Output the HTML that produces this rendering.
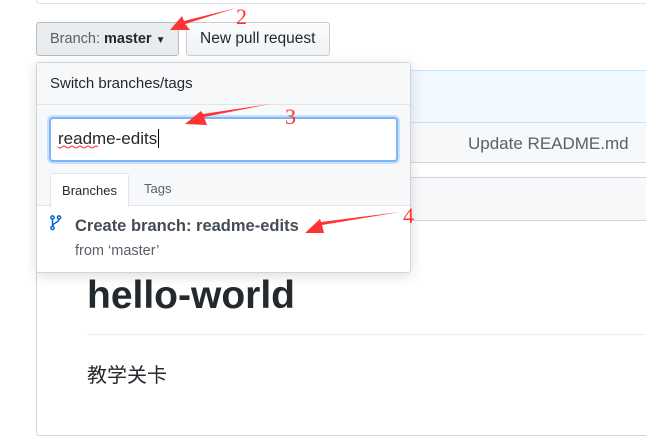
<!DOCTYPE html>
<html><head><meta charset="utf-8"><style>
*{box-sizing:border-box;margin:0;padding:0}
body{width:646px;height:437px;overflow:hidden;background:#fff;font-family:"Liberation Sans","Noto Sans CJK SC",sans-serif;position:relative;color:#24292e}
.a{position:absolute}
.btn{position:absolute;top:22px;height:34px;border:1px solid #c9cdd1;border-radius:3px;background:linear-gradient(#fafbfc,#eff3f6);font-size:14.5px;line-height:32px;padding-left:13px;color:#24292e}
</style></head><body>
<div class="a" style="left:36px;top:-10px;width:620px;height:14px;border:1px solid #e1e4e8;border-radius:3px"></div>
<div class="a" style="left:36px;top:70px;width:620px;height:366px;border:1px solid #d1d5da;border-radius:3px"></div>
<div class="a" style="left:37px;top:70px;width:620px;height:53px;background:#f1f8ff;border-top:1px solid #c8e1ff;border-bottom:1px solid #c8e1ff"></div>
<div class="a" style="left:37px;top:123px;width:620px;height:40px;background:#f6f8fa;border-bottom:1px solid #d1d5da"></div>
<div class="a" style="left:468px;top:134px;font-size:17px;color:#586069">Update README.md</div>
<div class="a" style="left:37px;top:177px;width:620px;height:44px;background:#f6f8fa;border-top:1px solid #d1d5da;border-bottom:1px solid #d1d5da"></div>
<div class="a" style="left:87px;top:274px;font-size:39px;font-weight:bold;color:#24292e">hello-world</div>
<div class="a" style="left:87px;top:334px;width:570px;height:1px;background:#eaecef"></div>
<div class="a" style="left:87px;top:359px;font-size:20px">教学关卡</div>

<div class="btn" style="left:36px;width:143px;background:#e9ecef;border-color:#b8bcc0"><span style="color:#586069">Branch:</span> <b style="font-weight:bold">master</b> <span style="font-size:10px">▼</span></div>
<div class="btn" style="left:186px;width:144px;font-size:15.5px">New pull request</div>

<div class="a" style="left:36px;top:62px;width:375px;height:211px;background:#fff;border:1px solid #d1d5da;border-radius:3px;box-shadow:0 3px 12px rgba(27,31,35,.15)">
 <div style="height:42px;background:#f6f8fa;border-bottom:1px solid #e1e4e8;font-size:15px;line-height:42px;padding-left:13px">Switch branches/tags</div>
 <div style="height:101px;background:#f6f8fa;border-bottom:1px solid #e1e4e8;position:relative">
  <div class="a" style="left:12px;top:12px;width:349px;height:45px;border:2px solid #7eb4f8;border-radius:4px;background:#fff;box-shadow:0 0 0 2px #c8e1ff;font-size:17px;line-height:40px;padding-left:7px">readme-edits<span style="border-left:1px solid #000;margin-left:1px"></span></div>
  <div class="a" style="left:13px;top:68px;width:79px;height:34px;background:#fff;border:1px solid #e1e4e8;border-bottom:none;border-radius:3px 3px 0 0;font-size:13px;line-height:33px;text-align:center">Branches</div>
  <div class="a" style="left:107px;top:76px;font-size:13px;color:#586069">Tags</div>
 </div>
 <svg class="a" style="left:13px;top:152px" width="12" height="16" viewBox="0 0 12 16"><g fill="none" stroke="#0366d6" stroke-width="1.5"><circle cx="2.5" cy="2.5" r="1.6"/><circle cx="9" cy="2.5" r="1.6"/><circle cx="2.5" cy="13" r="1.6"/><path d="M2.5 4v7.5M9 4c0 4-6.5 3.5-6.5 7.5"/></g></svg>
 <div class="a" style="left:38px;top:154px;font-size:16.5px;font-weight:bold;color:#444d56">Create branch: readme-edits</div>
 <div class="a" style="left:38px;top:180px;font-size:14.5px;color:#586069">from ‘master’</div>
</div>

<svg class="a" style="left:0;top:0" width="646" height="437">
<g fill="#f33">
<polygon points="236,8 185,24 190,30 170,30 182,16 184,21"/>
<polygon points="270,104 204,117 207,125 185,124 201,111 203,114"/>
<polygon points="400,212 322,225 324,233 305,233 320,219 321,222"/>
</g>
<g fill="#f33" font-family="Liberation Serif,serif" font-size="22">
<text x="236" y="24">2</text><text x="285" y="124">3</text><text x="403" y="223">4</text>
</g>
<path d="M58 147q2 2 4 0t4 0t4 0t4 0t4 0t4 0t4 0t4 0t4 0t4 0" stroke="#f33" stroke-width="1" fill="none"/>
</svg>
</body></html>
